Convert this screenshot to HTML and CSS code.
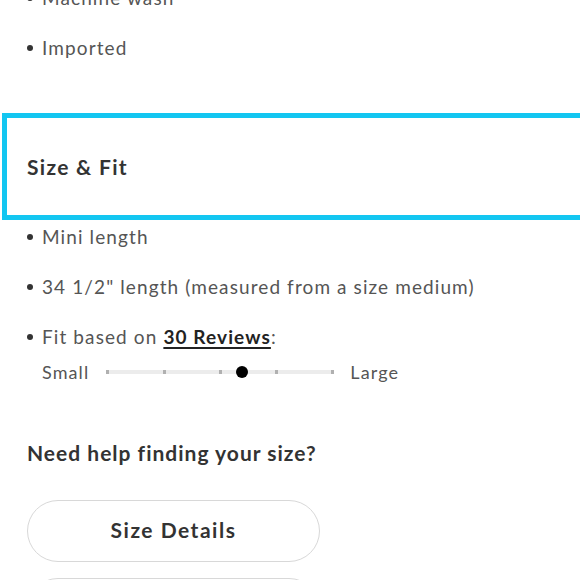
FILE: index.html
```html
<!DOCTYPE html>
<html>
<head>
<meta charset="utf-8">
<link rel="stylesheet" href="styles.css">
</head>
<body>
<div class="page">
  <ul class="list first">
    <li>Machine wash</li>
    <li>Imported</li>
  </ul>
  <div class="section-head">
    <h2>Size &amp; Fit</h2>
  </div>
  <ul class="list second">
    <li>Mini length</li>
    <li>34 1/2" length (measured from a size medium)</li>
    <li>Fit based on <a class="reviews" href="#">30 Reviews</a>:</li>
  </ul>
  <div class="fit">
    <span class="fit-label">Small</span>
    <div class="track">
      <span class="tick"></span><span class="tick"></span><span class="tick"></span><span class="tick"></span><span class="tick"></span>
      <span class="dot"></span>
    </div>
    <span class="fit-label">Large</span>
  </div>
  <h3 class="help">Need help finding your size?</h3>
  <button class="pill">Size Details</button>
  <button class="pill">Size Chart</button>
</div>
</body>
</html>
```

FILE: styles.css
```css
html, body {
  margin: 0;
  padding: 0;
  background: #fff;
  overflow: hidden;
}
body {
  font-family: Lato, "Open Sans", sans-serif;
  color: #555;
}
.page {
  width: 580px;
  height: 580px;
  overflow: hidden;
}
.list {
  list-style: none;
  margin: 0;
  padding: 0 0 0 27px;
}
.list li {
  display: flex;
  align-items: center;
  height: 50px;
  font-size: 19px;
  letter-spacing: 1.1px;
  color: #555;
}
.list li::before {
  content: "";
  width: 6px;
  height: 6px;
  border-radius: 50%;
  background: #333;
  margin-right: 9px;
  margin-top: 2px;
  flex: none;
}
.list.first {
  margin-top: -28px;
}
.section-head {
  margin: 41px -30px 0 2px;
  border: 5px solid #13c6f1;
  height: 97px;
  display: flex;
  align-items: center;
  padding-left: 20px;
}
.section-head h2 {
  margin: 0;
  font-size: 21px;
  font-weight: 700;
  color: #333;
  letter-spacing: 1.3px;
}
.list.second {
  margin-top: -9px;
}
.fit {
  display: flex;
  align-items: center;
  padding-left: 42px;
  height: 24px;
  margin-top: -1px;
}
.fit-label {
  font-size: 18px;
  letter-spacing: 1.1px;
  color: #555;
}
.track {
  position: relative;
  width: 228px;
  height: 4px;
  background: #ececec;
  margin: 0 16px 0 17px;
  display: flex;
  justify-content: space-between;
  align-items: center;
}
.tick {
  width: 3px;
  height: 4px;
  background: #b0b0b0;
}
.dot {
  position: absolute;
  left: 130px;
  top: -4px;
  width: 12px;
  height: 12px;
  border-radius: 50%;
  background: #000;
}
.reviews {
  color: #222;
  font-weight: 700;
  text-decoration: underline;
  text-decoration-thickness: 2px;
  text-underline-offset: 3px;
  margin-left: 6px;
}
.help {
  margin: 57px 0 0 27px;
  line-height: 24px;
  font-size: 21px;
  font-weight: 700;
  color: #333;
  letter-spacing: 1px;
}
.pill {
  display: block;
  margin: 35px 0 0 27px;
  width: 293px;
  height: 62px;
  padding: 0 0 3px;
  border: 1.5px solid #d8d8d8;
  border-radius: 31px;
  background: #fff;
  font-family: Lato, "Open Sans", sans-serif;
  font-size: 21px;
  font-weight: 700;
  color: #333;
  letter-spacing: 1.5px;
}
.pill + .pill {
  margin-top: 16px;
}
```
